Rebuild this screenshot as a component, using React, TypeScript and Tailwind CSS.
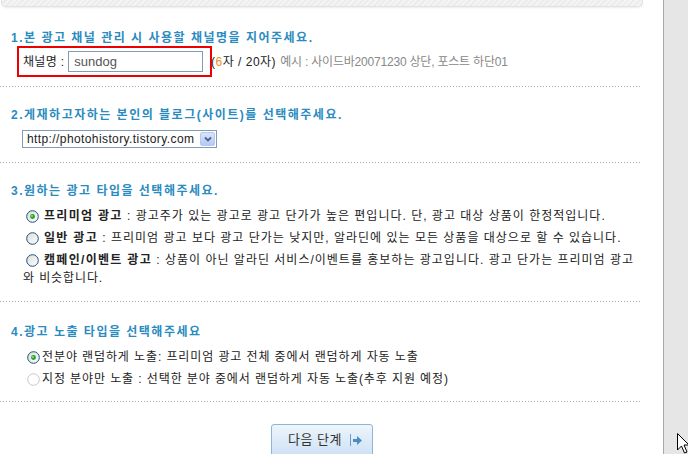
import React from "react";

const Radio = ({ checked, disabled }: { checked?: boolean; disabled?: boolean }) => (
  <svg width="13" height="13" viewBox="0 0 13 13" className="shrink-0">
    <defs>
      <linearGradient id="rg" x1="0" y1="0" x2="1" y2="1">
        <stop offset="0" stopColor="#dcdcd6" />
        <stop offset="1" stopColor="#ffffff" />
      </linearGradient>
    </defs>
    <circle cx="6.5" cy="6.5" r="5.8" fill={disabled ? "#fff" : "url(#rg)"} stroke={disabled ? "#cac8bb" : "#1c5180"} strokeWidth="1" />
    {checked && <circle cx="6.5" cy="6.5" r="2.4" fill="#21a121" />}
    {checked && <circle cx="6" cy="6" r="1" fill="#8ee68e" />}
  </svg>
);

const Dotted = () => (
  <div className="h-px w-[641px] bg-[repeating-linear-gradient(90deg,#a8a8a8_0,#a8a8a8_1px,transparent_1px,transparent_3px)]" />
);

const H = ({ children }: { children: React.ReactNode }) => (
  <div className="h-[14px] pl-[11px] text-[12px] font-bold leading-[14px] tracking-[1.5px] text-[#2a8bbf]">{children}</div>
);

export default function App() {
  return (
    <div className="relative flex h-[454px] w-[688px] overflow-hidden bg-white font-['Liberation_Sans','Noto_Sans_CJK_KR',sans-serif] text-[12px] text-[#222]">
      <div className="w-[663px] shrink-0">
        <div className="ml-[1px] h-[7px] w-[642px] rounded-b-[5px] border border-t-0 border-[#e2e2e2] bg-[repeating-linear-gradient(135deg,#f4f4f4_0,#f4f4f4_2px,#ececec_2px,#ececec_4px)] shadow-[0_1px_2px_rgba(0,0,0,0.08)]" />

        {/* Section 1 */}
        <div className="pt-[24px]">
          <H>1.본 광고 채널 관리 시 사용할 채널명을 지어주세요.</H>
          <div className="mt-[1px] flex h-[31px] items-center pl-[17px]">
            <div className="flex h-[31px] w-[195px] items-center border-2 border-[#ee0000] pl-[4px]">
              <span className="tracking-[0.3px]">채널명 :</span>
              <div className="ml-[4px] flex h-[21px] w-[135px] items-center border border-[#7f9db9] pl-[5px] text-[13px] text-[#555]">sundog</div>
            </div>
            <span className="ml-[-1px] tracking-[0.5px]">(<span className="text-[#f08c1e]">6</span>자 / 20자)</span>
            <span className="ml-[4px] tracking-[-0.2px] text-[#888]">예시 : 사이드바20071230 상단, 포스트 하단01</span>
          </div>
          <div className="mt-[9px]"><Dotted /></div>
        </div>

        {/* Section 2 */}
        <div className="pt-[21px]">
          <H>2.게재하고자하는 본인의 블로그(사이트)를 선택해주세요.</H>
          <div className="mt-[8px] pl-[22px]">
            <div className="flex h-[18px] w-[195px] items-center justify-between border border-[#7f9db9] pl-[4px] pr-[1px]">
              <span className="text-[12px] leading-[14px] tracking-[0.4px] text-[#222]">http://photohistory.tistory.com</span>
              <div className="flex h-[14px] w-[15px] items-center justify-center rounded-[2px] border border-[#b5c8f0] bg-[linear-gradient(#d8e4fb,#b4c9f4)]">
                <svg width="8" height="6" viewBox="0 0 8 6"><path d="M1 1.5 L4 4.5 L7 1.5" stroke="#4d6185" strokeWidth="1.8" fill="none" /></svg>
              </div>
            </div>
          </div>
          <div className="mt-[14px]"><Dotted /></div>
        </div>

        {/* Section 3 */}
        <div className="pt-[21px]">
          <H>3.원하는 광고 타입을 선택해주세요.</H>
          <div className="mt-[7px] pl-[26px] tracking-[1px]">
            <div className="flex h-[22px] items-center gap-[5px]"><Radio checked /><span><b className="tracking-[1.3px]">프리미엄 광고</b> : 광고주가 있는 광고로 광고 단가가 높은 편입니다. 단, 광고 대상 상품이 한정적입니다.</span></div>
            <div className="flex h-[22px] items-center gap-[5px]"><Radio /><span><b className="tracking-[1.3px]">일반 광고</b> : 프리미엄 광고 보다 광고 단가는 낮지만, 알라딘에 있는 모든 상품을 대상으로 할 수 있습니다.</span></div>
            <div className="flex h-[22px] items-center gap-[5px]"><Radio /><span><b className="tracking-[1.3px]">캠페인/이벤트 광고</b> : 상품이 아닌 알라딘 서비스/이벤트를 홍보하는 광고입니다. 광고 단가는 프리미엄 광고</span></div>
          </div>
          <div className="h-[14px] pl-[23px] leading-[14px] tracking-[0.9px]">와 비슷합니다.</div>
          <div className="mt-[16px]"><Dotted /></div>
        </div>

        {/* Section 4 */}
        <div className="pt-[23px]">
          <H>4.광고 노출 타입을 선택해주세요</H>
          <div className="mt-[7px] pl-[27px] tracking-[0.9px]">
            <div className="flex h-[22px] items-center gap-[2px]"><Radio checked /><span>전분야 랜덤하게 노출: 프리미엄 광고 전체 중에서 랜덤하게 자동 노출</span></div>
            <div className="flex h-[22px] items-center gap-[2px]"><Radio disabled /><span>지정 분야만 노출 : 선택한 분야 중에서 랜덤하게 자동 노출(추후 지원 예정)</span></div>
          </div>
          <div className="mt-[11px]"><Dotted /></div>
        </div>

        <div className="flex pl-[271px] pt-[22px]">
          <div className="flex h-[36px] w-[102px] items-center justify-center gap-[8px] rounded-[3px] border border-[#8fb4d8] bg-[linear-gradient(#eef5fc,#c9dff3)] pb-[4px] pl-[6px] text-[13px] text-[#333]">
            <span className="tracking-[0.5px]">다음 단계</span>
            <span className="flex items-center gap-[2px]">
              <span className="h-[12px] w-px bg-[#6a9cc8]" />
              <svg width="9" height="9" viewBox="0 0 9 9"><path d="M0 3 H4 V0 L9 4.5 L4 9 V6 H0 Z" fill="#4a8cc4" /></svg>
            </span>
          </div>
        </div>
      </div>
      <div className="w-[25px] shrink-0 border-l border-[#a9a9a9] bg-[#e6e6e6]" />

      <svg className="absolute left-[677px] top-[433px]" width="12" height="21" viewBox="0 0 12 21">
        <path d="M0.5 0.5 V17 L4.5 13 L7.5 20 L10 19 L7 12 H12 Z" fill="#fff" stroke="#000" strokeWidth="1" />
      </svg>
    </div>
  );
}
